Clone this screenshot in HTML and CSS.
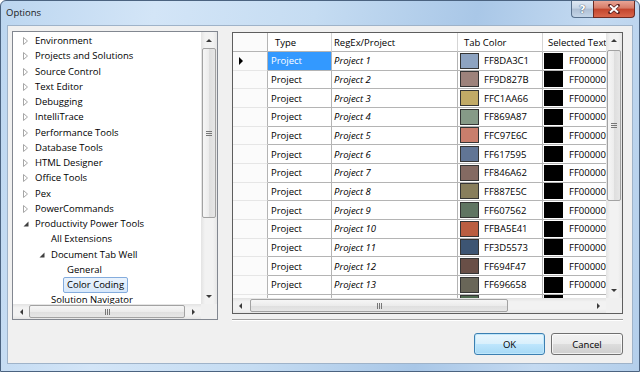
FILE: index.html
```html
<!DOCTYPE html>
<html lang="en">
<head>
  <meta charset="UTF-8">
  <title>Options</title>
  <link rel="stylesheet" href="styles.css">
</head>
<body>

<div class="window">
  <div class="titlebar">
    <span class="title">Options</span>
    <div class="caption-btns">
      <div class="cap help">?</div>
      <div class="cap close">
        <svg width="12" height="10" viewBox="0 0 12 10">
          <path d="M2 1.5 L10 8.5 M10 1.5 L2 8.5" stroke="#5a2020" stroke-width="3.6" stroke-linecap="round"/>
          <path d="M2 1.5 L10 8.5 M10 1.5 L2 8.5" stroke="#fff" stroke-width="2"/>
        </svg>
      </div>
    </div>
  </div>

  <div class="client">
    <div class="main">

      <!-- settings tree -->
      <div class="tree-box">
        <ul class="tree">
          <li class="lvl0"><svg class="tw" width="6" height="8"><path d="M0.5 0.5 L4.5 4 L0.5 7.5 Z" fill="#fff" stroke="#a6a6a6"/></svg><span class="lbl">Environment</span></li>
          <li class="lvl0"><svg class="tw" width="6" height="8"><path d="M0.5 0.5 L4.5 4 L0.5 7.5 Z" fill="#fff" stroke="#a6a6a6"/></svg><span class="lbl">Projects and Solutions</span></li>
          <li class="lvl0"><svg class="tw" width="6" height="8"><path d="M0.5 0.5 L4.5 4 L0.5 7.5 Z" fill="#fff" stroke="#a6a6a6"/></svg><span class="lbl">Source Control</span></li>
          <li class="lvl0"><svg class="tw" width="6" height="8"><path d="M0.5 0.5 L4.5 4 L0.5 7.5 Z" fill="#fff" stroke="#a6a6a6"/></svg><span class="lbl">Text Editor</span></li>
          <li class="lvl0"><svg class="tw" width="6" height="8"><path d="M0.5 0.5 L4.5 4 L0.5 7.5 Z" fill="#fff" stroke="#a6a6a6"/></svg><span class="lbl">Debugging</span></li>
          <li class="lvl0"><svg class="tw" width="6" height="8"><path d="M0.5 0.5 L4.5 4 L0.5 7.5 Z" fill="#fff" stroke="#a6a6a6"/></svg><span class="lbl">IntelliTrace</span></li>
          <li class="lvl0"><svg class="tw" width="6" height="8"><path d="M0.5 0.5 L4.5 4 L0.5 7.5 Z" fill="#fff" stroke="#a6a6a6"/></svg><span class="lbl">Performance Tools</span></li>
          <li class="lvl0"><svg class="tw" width="6" height="8"><path d="M0.5 0.5 L4.5 4 L0.5 7.5 Z" fill="#fff" stroke="#a6a6a6"/></svg><span class="lbl">Database Tools</span></li>
          <li class="lvl0"><svg class="tw" width="6" height="8"><path d="M0.5 0.5 L4.5 4 L0.5 7.5 Z" fill="#fff" stroke="#a6a6a6"/></svg><span class="lbl">HTML Designer</span></li>
          <li class="lvl0"><svg class="tw" width="6" height="8"><path d="M0.5 0.5 L4.5 4 L0.5 7.5 Z" fill="#fff" stroke="#a6a6a6"/></svg><span class="lbl">Office Tools</span></li>
          <li class="lvl0"><svg class="tw" width="6" height="8"><path d="M0.5 0.5 L4.5 4 L0.5 7.5 Z" fill="#fff" stroke="#a6a6a6"/></svg><span class="lbl">Pex</span></li>
          <li class="lvl0"><svg class="tw" width="6" height="8"><path d="M0.5 0.5 L4.5 4 L0.5 7.5 Z" fill="#fff" stroke="#a6a6a6"/></svg><span class="lbl">PowerCommands</span></li>
          <li class="lvl0"><svg class="tw" width="6" height="8"><path d="M5.5 1.5 L5.5 6.5 L0.5 6.5 Z" fill="#404040"/></svg><span class="lbl">Productivity Power Tools</span></li>
          <li class="lvl1"><span class="tw"></span><span class="lbl">All Extensions</span></li>
          <li class="lvl1"><svg class="tw" width="6" height="8"><path d="M5.5 1.5 L5.5 6.5 L0.5 6.5 Z" fill="#404040"/></svg><span class="lbl">Document Tab Well</span></li>
          <li class="lvl2"><span class="tw"></span><span class="lbl">General</span></li>
          <li class="lvl2"><span class="tw"></span><span class="lbl selected">Color Coding</span></li>
          <li class="lvl1"><span class="tw"></span><span class="lbl">Solution Navigator</span></li>
        </ul>
        <div class="vscroll">
          <div class="sb-btn"><span class="arr up"></span></div>
          <div class="sb-track"><div class="thumb"><span class="grip"></span></div></div>
          <div class="sb-btn"><span class="arr down"></span></div>
        </div>
        <div class="hscroll">
          <div class="sb-btn"><span class="arr left"></span></div>
          <div class="sb-track"><div class="thumb"><span class="grip"></span></div></div>
          <div class="sb-btn"><span class="arr right"></span></div>
        </div>
        <div class="corner"></div>
      </div>

      <div class="right-pane">
        <div class="grid-box">
          <div class="grid">
            <div class="g-row head">
              <div class="c c-head"></div>
              <div class="c c-type">Type</div>
              <div class="c c-rx">RegEx/Project</div>
              <div class="c c-tab">Tab Color</div>
              <div class="c c-sel">Selected Text</div>
            </div>
            <div class="g-row">
              <div class="c c-head"><span class="cur"></span></div>
              <div class="c c-type active">Project</div>
              <div class="c c-rx">Project 1</div>
              <div class="c c-tab"><span class="sw" style="background:#8DA3C1"></span>FF8DA3C1</div>
              <div class="c c-sel"><span class="sw black"></span>FF000000</div>
            </div>
            <div class="g-row">
              <div class="c c-head"></div>
              <div class="c c-type">Project</div>
              <div class="c c-rx">Project 2</div>
              <div class="c c-tab"><span class="sw" style="background:#9D827B"></span>FF9D827B</div>
              <div class="c c-sel"><span class="sw black"></span>FF000000</div>
            </div>
            <div class="g-row">
              <div class="c c-head"></div>
              <div class="c c-type">Project</div>
              <div class="c c-rx">Project 3</div>
              <div class="c c-tab"><span class="sw" style="background:#C1AA66"></span>FFC1AA66</div>
              <div class="c c-sel"><span class="sw black"></span>FF000000</div>
            </div>
            <div class="g-row">
              <div class="c c-head"></div>
              <div class="c c-type">Project</div>
              <div class="c c-rx">Project 4</div>
              <div class="c c-tab"><span class="sw" style="background:#869A87"></span>FF869A87</div>
              <div class="c c-sel"><span class="sw black"></span>FF000000</div>
            </div>
            <div class="g-row">
              <div class="c c-head"></div>
              <div class="c c-type">Project</div>
              <div class="c c-rx">Project 5</div>
              <div class="c c-tab"><span class="sw" style="background:#C97E6C"></span>FFC97E6C</div>
              <div class="c c-sel"><span class="sw black"></span>FF000000</div>
            </div>
            <div class="g-row">
              <div class="c c-head"></div>
              <div class="c c-type">Project</div>
              <div class="c c-rx">Project 6</div>
              <div class="c c-tab"><span class="sw" style="background:#617595"></span>FF617595</div>
              <div class="c c-sel"><span class="sw black"></span>FF000000</div>
            </div>
            <div class="g-row">
              <div class="c c-head"></div>
              <div class="c c-type">Project</div>
              <div class="c c-rx">Project 7</div>
              <div class="c c-tab"><span class="sw" style="background:#846A62"></span>FF846A62</div>
              <div class="c c-sel"><span class="sw black"></span>FF000000</div>
            </div>
            <div class="g-row">
              <div class="c c-head"></div>
              <div class="c c-type">Project</div>
              <div class="c c-rx">Project 8</div>
              <div class="c c-tab"><span class="sw" style="background:#887E5C"></span>FF887E5C</div>
              <div class="c c-sel"><span class="sw black"></span>FF000000</div>
            </div>
            <div class="g-row">
              <div class="c c-head"></div>
              <div class="c c-type">Project</div>
              <div class="c c-rx">Project 9</div>
              <div class="c c-tab"><span class="sw" style="background:#607562"></span>FF607562</div>
              <div class="c c-sel"><span class="sw black"></span>FF000000</div>
            </div>
            <div class="g-row">
              <div class="c c-head"></div>
              <div class="c c-type">Project</div>
              <div class="c c-rx">Project 10</div>
              <div class="c c-tab"><span class="sw" style="background:#BA5E41"></span>FFBA5E41</div>
              <div class="c c-sel"><span class="sw black"></span>FF000000</div>
            </div>
            <div class="g-row">
              <div class="c c-head"></div>
              <div class="c c-type">Project</div>
              <div class="c c-rx">Project 11</div>
              <div class="c c-tab"><span class="sw" style="background:#3D5573"></span>FF3D5573</div>
              <div class="c c-sel"><span class="sw black"></span>FF000000</div>
            </div>
            <div class="g-row">
              <div class="c c-head"></div>
              <div class="c c-type">Project</div>
              <div class="c c-rx">Project 12</div>
              <div class="c c-tab"><span class="sw" style="background:#694F47"></span>FF694F47</div>
              <div class="c c-sel"><span class="sw black"></span>FF000000</div>
            </div>
            <div class="g-row">
              <div class="c c-head"></div>
              <div class="c c-type">Project</div>
              <div class="c c-rx">Project 13</div>
              <div class="c c-tab"><span class="sw" style="background:#696658"></span>FF696658</div>
              <div class="c c-sel"><span class="sw black"></span>FF000000</div>
            </div>
            <div class="g-row">
              <div class="c c-head"></div>
              <div class="c c-type">Project</div>
              <div class="c c-rx">Project 14</div>
              <div class="c c-tab"><span class="sw" style="background:#4E6A4F"></span>FF4E6A4F</div>
              <div class="c c-sel"><span class="sw black"></span>FF000000</div>
            </div>
          </div>
          <div class="vscroll">
            <div class="sb-btn"><span class="arr up"></span></div>
            <div class="sb-track"><div class="thumb"><span class="grip"></span></div></div>
            <div class="sb-btn"><span class="arr down"></span></div>
          </div>
          <div class="hscroll">
            <div class="sb-btn"><span class="arr left"></span></div>
            <div class="sb-track"><div class="thumb"><span class="grip"></span></div></div>
            <div class="sb-btn"><span class="arr right"></span></div>
          </div>
          <div class="corner"></div>
        </div>
        <div class="separator"></div>
      </div>

    </div>

    <div class="actions">
      <button class="btn default">OK</button>
      <button class="btn">Cancel</button>
    </div>
  </div>
</div>

</body>
</html>
```

FILE: styles.css
```css
body {
  margin: 0;
  font-family: 'Open Sans', sans-serif;
  font-size: 9.5px;
  color: #000;
}

.window {
  width: 640px;
  height: 372px;
  box-sizing: border-box;
  border: 1px solid #4b6380;
  border-radius: 6px 6px 0 0;
  padding: 0 6px 7px 6px;
  display: flex;
  flex-direction: column;
  background: linear-gradient(100deg, #bcd6f0 0%, #d3e5f7 22%, #c5dcf2 45%, #a9c7e7 68%, #c4daf1 85%, #b4cfeb 100%);
}

/* title bar */
.titlebar {
  height: 24px;
  display: flex;
  align-items: center;
}

.title {
  margin-left: -1px;
  margin-top: -1px;
  color: #1b1b1b;
}

.caption-btns {
  margin-left: auto;
  margin-right: -2px;
  align-self: flex-start;
  display: flex;
}

.cap {
  height: 17px;
  box-sizing: border-box;
  border: 1px solid #58708c;
  border-top: none;
  display: flex;
  align-items: center;
  justify-content: center;
}

.cap.help {
  width: 22px;
  border-right: none;
  border-radius: 0 0 0 4px;
  background: linear-gradient(#dfe8f3, #c6d5e6 45%, #aebfd4 50%, #c4d5e8);
  color: #fff;
  font-family: 'DejaVu Sans', sans-serif;
  font-weight: bold;
  font-size: 11px;
  text-shadow: 0 0 1px #344a66, 0 0 1px #344a66;
}

.cap.close {
  width: 42px;
  border-color: #6e2a22;
  border-radius: 0 0 4px 0;
  background: linear-gradient(#e8a495, #d67a66 45%, #c2442c 50%, #d9664b);
}

/* client area */
.client {
  flex: 1;
  background: #f0f0f0;
  border: 1px solid #9fb3c9;
  padding: 5px 9px 0 4px;
  display: flex;
  flex-direction: column;
}

.main {
  display: flex;
  gap: 14px;
}

/* tree */
.tree-box {
  width: 206px;
  height: 289px;
  box-sizing: border-box;
  border: 1px solid #828790;
  background: #fff;
  display: grid;
  grid-template-columns: 188px 16px;
  grid-template-rows: 272px 15px;
}

.tree {
  list-style: none;
  margin: 0;
  padding: 1.5px 0 0 0;
  overflow: hidden;
}

.tree li {
  height: 15.25px;
  display: flex;
  align-items: center;
  white-space: nowrap;
}

.tree .lvl0 { padding-left: 10px; }
.tree .lvl1 { padding-left: 26px; }
.tree .lvl2 { padding-left: 42px; }

.tw {
  width: 8px;
  flex: none;
}

.lbl {
  padding: 0 3px;
  border: 1px solid transparent;
  line-height: 14px;
}

.lbl.selected {
  background: linear-gradient(#eaf3fd, #d7e8fb);
  border-color: #84acdd;
  border-radius: 2px;
}

/* scrollbars */
.vscroll {
  display: flex;
  flex-direction: column;
  background: linear-gradient(to right, #e3e3e3, #f2f2f2 25%, #f2f2f2 75%, #e6e6e6);
}

.hscroll {
  display: flex;
  background: linear-gradient(#e3e3e3, #f2f2f2 25%, #f2f2f2 75%, #e6e6e6);
}

.vscroll .sb-btn {
  height: 16px;
  display: flex;
  align-items: center;
  justify-content: center;
}

.hscroll .sb-btn {
  width: 16px;
  display: flex;
  align-items: center;
  justify-content: center;
}

.sb-track {
  flex: 1;
  display: flex;
  flex-direction: column;
}

.hscroll .sb-track {
  flex-direction: row;
}

.thumb {
  box-sizing: border-box;
  border: 1px solid #a2a2a2;
  border-radius: 2px;
  display: flex;
  align-items: center;
  justify-content: center;
}

.vscroll .thumb {
  margin: 0 1px;
  background: linear-gradient(to right, #f6f6f6, #ececec 50%, #dedede 50%, #e6e6e6);
}

.hscroll .thumb {
  margin: 1px 0;
  flex-direction: row;
  background: linear-gradient(#f6f6f6, #ececec 50%, #dedede 50%, #e6e6e6);
}

.vscroll .grip {
  width: 6px;
  height: 5px;
  background: repeating-linear-gradient(#777 0 1px, transparent 1px 2px);
}

.hscroll .grip {
  width: 5px;
  height: 6px;
  background: repeating-linear-gradient(to right, #777 0 1px, transparent 1px 2px);
}

.arr {
  width: 0;
  height: 0;
  border: 3px solid transparent;
}

.arr.up { border-bottom: 3px solid #3a3a3a; border-top-width: 0; }
.arr.down { border-top: 3px solid #3a3a3a; border-bottom-width: 0; }
.arr.left { border-right: 3px solid #3a3a3a; border-left-width: 0; }
.arr.right { border-left: 3px solid #3a3a3a; border-right-width: 0; }

.tree-box .vscroll .thumb { height: 170px; }
.tree-box .hscroll .thumb { width: 156px; }

.corner {
  background: #f0f0f0;
}

/* grid */
.right-pane {
  width: 391px;
  padding-top: 1px;
}

.grid-box {
  height: 282px;
  box-sizing: border-box;
  border: 1px solid #5e5e5e;
  background: #fff;
  display: grid;
  grid-template-columns: 373px 16px;
  grid-template-rows: 265px 15px;
}

.grid {
  overflow: hidden;
}

.g-row {
  display: flex;
  height: 18.67px;
}

.g-row.head {
  height: 19px;
}

.c {
  flex: none;
  box-sizing: border-box;
  border-right: 1px solid #b4b4b4;
  border-bottom: 1px solid #b4b4b4;
  display: flex;
  align-items: center;
  white-space: nowrap;
  overflow: hidden;
}

.c-head {
  width: 35px;
  background: #fbfbfb;
  border-bottom-color: #e6e6e6;
  padding-left: 6px;
}
.c-type { width: 64px; padding-left: 3px; }
.c-rx { width: 126px; padding-left: 2px; font-style: italic; }
.c-tab { width: 85px; padding-left: 2px; }
.c-sel { width: 100px; padding-left: 1px; border-right: none; }

.head .c {
  border-right-color: #d5d5d5;
  border-bottom-color: #b4b4b4;
  font-style: normal;
}
.head .c-type { padding-left: 7px; }
.head .c-rx { padding-left: 2px; }
.head .c-tab { padding-left: 6px; }
.head .c-sel { padding-left: 5px; }
.head .c-head { border-right-color: #b4b4b4; }

.c.active {
  background: #3399ff;
  color: #fff;
}

.cur {
  width: 0;
  height: 0;
  border-left: 4px solid #000;
  border-top: 4px solid transparent;
  border-bottom: 4px solid transparent;
}

.sw {
  width: 19px;
  height: 16px;
  box-sizing: border-box;
  border: 1px solid #353535;
  margin-right: 5px;
  flex: none;
}

.sw.black {
  background: #000;
  border-color: #000;
  margin-right: 6px;
}

.grid-box .vscroll .sb-btn { height: 15px; }
.grid-box .vscroll .thumb { margin-top: 2px; height: 151px; }
.grid-box .hscroll .sb-btn { width: 15px; }
.grid-box .hscroll .thumb { margin-left: 2px; width: 258px; }

.separator {
  margin-top: 5px;
  height: 1px;
  background: #a0a0a0;
  border-bottom: 1px solid #fff;
}

/* buttons */
.actions {
  display: flex;
  justify-content: flex-end;
  gap: 6px;
  margin-top: 12px;
}

.btn {
  width: 72px;
  height: 22px;
  font: inherit;
  color: #000;
  border: 1px solid #707070;
  border-radius: 3px;
  background: linear-gradient(#f2f2f2, #ebebeb 48%, #dddddd 50%, #cfcfcf);
  box-shadow: inset 0 0 0 1px rgba(255,255,255,0.7);
  padding: 0;
}

.btn.default {
  width: 71px;
  border-color: #3c7fb1;
  background: linear-gradient(#eaf6fd, #d9f0fc 48%, #bee6fd 50%, #a7d9f5);
  box-shadow: inset 0 0 0 1px #bfe7fb;
}
```
